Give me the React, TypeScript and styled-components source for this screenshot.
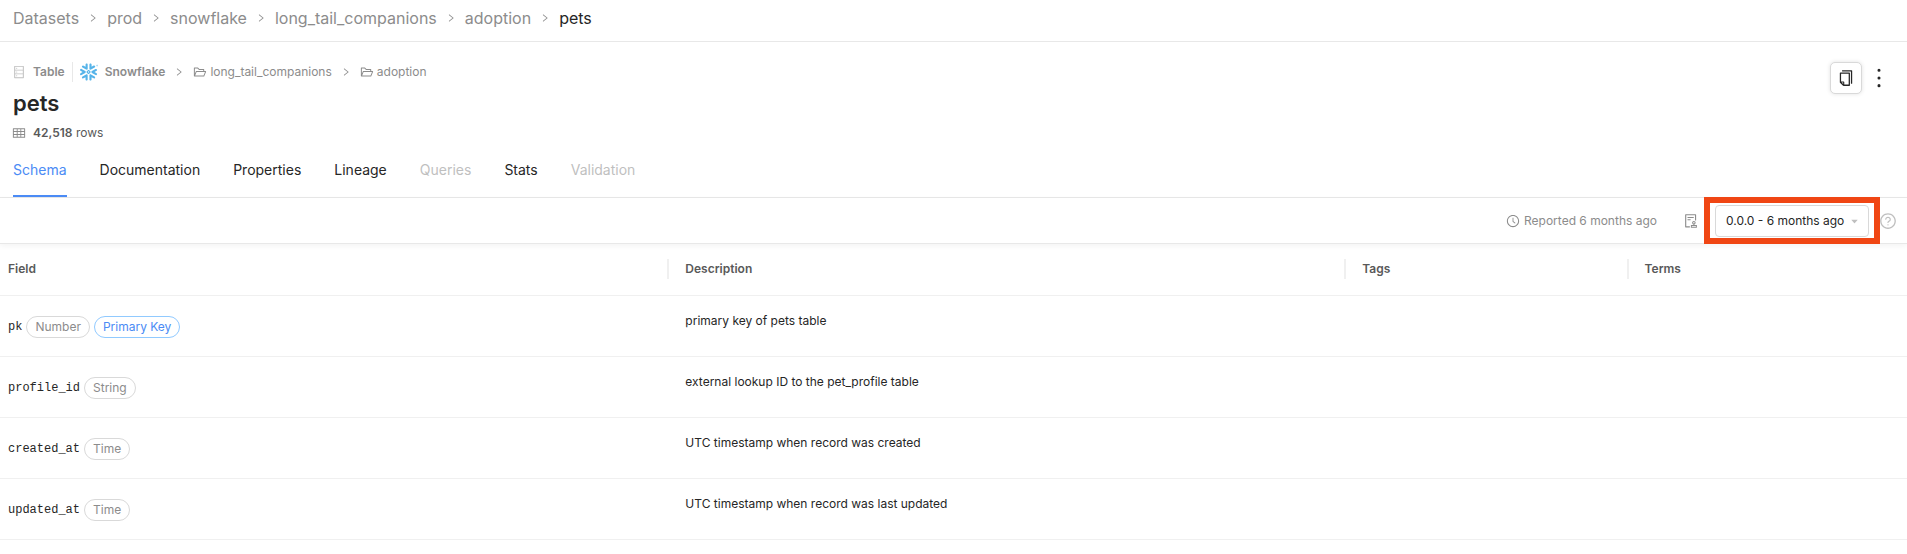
import React from 'react';
import styled, { createGlobalStyle } from 'styled-components';
import {
  AiFillCaretDown,
  AiOutlineAudit,
  AiOutlineClockCircle,
  AiOutlineCopy,
  AiOutlineDatabase,
  AiOutlineFolderOpen,
  AiOutlineMore,
  AiOutlineQuestionCircle,
  AiOutlineRight,
  AiOutlineTable,
} from 'react-icons/ai';
import { SiSnowflake } from 'react-icons/si';

const GlobalStyle = createGlobalStyle`
  * { box-sizing: border-box; }
  body {
    margin: 0;
    background: #fff;
    color: #262626;
    font-family: Inter, "Liberation Sans", sans-serif;
    font-size: 12px;
    line-height: 20px;
  }
  a { color: inherit; text-decoration: none; }
  button, select { font: inherit; color: inherit; }
  svg { display: block; flex: none; }
`;

const BreadcrumbBar = styled.nav`
  display: flex;
  align-items: center;
  gap: 9px;
  height: 42px;
  padding: 0 13px 6px;
  border-bottom: 1px solid #e8e8e8;
  font-size: 16px;
  color: #8c8c8c;
`;

const Crumb = styled.a<{ $current?: boolean }>`
  color: ${(p) => (p.$current ? '#262626' : 'inherit')};
`;

const Header = styled.header`
  display: flex;
  justify-content: space-between;
  padding: 20px 14px 0 12px;
`;

const Summary = styled.div`
  display: flex;
  flex-direction: column;
`;

const Platform = styled.div`
  display: flex;
  align-items: center;
  height: 20px;
  color: #8c8c8c;
`;

const EntityType = styled.span`
  display: flex;
  align-items: center;
  gap: 7px;
  padding-right: 7px;
  border-right: 1px solid #e8e8e8;
  font-weight: 600;
  svg { color: #bfbfbf; }
`;

const PlatformName = styled.a`
  display: flex;
  align-items: center;
  gap: 7px;
  padding-left: 7px;
  font-weight: 600;
  svg { color: #56b4e9; }
`;

const PathSeparator = styled(AiOutlineRight)`
  margin: 0 9px;
`;

const Folder = styled.a`
  display: flex;
  align-items: center;
  gap: 3px;
`;

const Title = styled.h1`
  margin: 5px 0 4px 1px;
  font-size: 22px;
  line-height: 32px;
  font-weight: 600;
`;

const RowCount = styled.div`
  display: flex;
  align-items: center;
  gap: 7px;
  color: #595959;
  svg { color: #8c8c8c; }
  b { font-weight: 600; }
`;

const Actions = styled.div`
  display: flex;
  align-items: center;
  align-self: flex-start;
  gap: 3px;
`;

const CopyButton = styled.button`
  display: grid;
  place-items: center;
  width: 32px;
  height: 32px;
  padding: 0;
  border: 1px solid #d9d9d9;
  border-radius: 5px;
  background: #fff;
  box-shadow: 0 0 4px rgba(0, 0, 0, 0.12);
`;

const MenuButton = styled.button`
  padding: 0;
  border: 0;
  background: none;
`;

const Tabs = styled.div`
  display: flex;
  gap: 33px;
  padding: 0 13px;
  border-bottom: 1px solid #e8e8e8;
`;

const Tab = styled.button<{ $active?: boolean }>`
  height: 54px;
  padding: 2px 0 0;
  border: 0;
  border-bottom: 2px solid ${(p) => (p.$active ? '#4b8bf5' : 'transparent')};
  background: none;
  color: ${(p) => (p.$active ? '#4b8bf5' : '#262626')};
  font-size: 14px;
  &:disabled { color: #bfbfbf; }
`;

const Toolbar = styled.section`
  display: flex;
  align-items: center;
  justify-content: flex-end;
  height: 46px;
  padding-right: 10px;
  border-bottom: 1px solid #e8e8e8;
  box-shadow: 0 2px 6px rgba(0, 0, 0, 0.05);
  color: #8c8c8c;
`;

const Reported = styled.span`
  display: flex;
  align-items: center;
  gap: 4px;
  margin-right: 26px;
`;

const AuditButton = styled(MenuButton)`
  color: #8c8c8c;
`;

const Highlight = styled.div`
  margin: -1px -1px -1px 5px;
  padding: 2px 5px 1px;
  border: 6px solid #f04614;
`;

const VersionPicker = styled.label`
  display: grid;
  align-items: center;
  width: 154px;
  svg {
    grid-area: 1 / 1;
    justify-self: end;
    margin-right: 10px;
    color: #bfbfbf;
    pointer-events: none;
  }
`;

const VersionSelect = styled.select`
  grid-area: 1 / 1;
  width: 100%;
  height: 32px;
  padding: 0 12px 0 10px;
  border: 1px solid #d9d9d9;
  border-radius: 4px;
  background: #fff;
  color: #262626;
  appearance: none;
`;

const HelpButton = styled(MenuButton)`
  color: #bfbfbf;
`;

const SchemaTable = styled.table`
  width: 100%;
  table-layout: fixed;
  border-collapse: separate;
  border-spacing: 0;
`;

const HeadCell = styled.th<{ $width: string }>`
  width: ${(p) => p.$width};
  height: 52px;
  padding: 0 0 1px;
  border-bottom: 1px solid #f0f0f0;
  color: #595959;
  font-weight: 600;
  text-align: left;
  span {
    display: block;
    padding-left: 16px;
    border-left: 2px solid #f0f0f0;
    margin-left: -2px;
  }
  &:first-child span {
    padding-left: 8px;
    margin: 0;
    border: 0;
  }
`;

const Cell = styled.td`
  height: 61px;
  padding: 15px 16px;
  border-bottom: 1px solid #f0f0f0;
  vertical-align: top;
`;

const FieldCell = styled(Cell)`
  padding: 2px 8px 0;
  vertical-align: middle;
`;

const Field = styled.div`
  display: flex;
  align-items: center;
  gap: 4px;
`;

const FieldName = styled.code`
  font-family: "Liberation Mono", monospace;
  font-size: 12px;
`;

const Pill = styled.span<{ $primary?: boolean }>`
  padding: 0 8px;
  border: 1px solid ${(p) => (p.$primary ? '#91caff' : '#d9d9d9')};
  border-radius: 11px;
  color: ${(p) => (p.$primary ? '#4b8bf5' : '#8c8c8c')};
`;

const crumbs = ['Datasets', 'prod', 'snowflake', 'long_tail_companions', 'adoption', 'pets'];

const tabs = [
  { name: 'Schema', active: true },
  { name: 'Documentation' },
  { name: 'Properties' },
  { name: 'Lineage' },
  { name: 'Queries', disabled: true },
  { name: 'Stats' },
  { name: 'Validation', disabled: true },
];

const fields = [
  { name: 'pk', type: 'Number', primary: true, description: 'primary key of pets table' },
  { name: 'profile_id', type: 'String', description: 'external lookup ID to the pet_profile table' },
  { name: 'created_at', type: 'Time', description: 'UTC timestamp when record was created' },
  { name: 'updated_at', type: 'Time', description: 'UTC timestamp when record was last updated' },
];

const columns = [
  { name: 'Field', width: '35.1%' },
  { name: 'Description', width: '35.5%' },
  { name: 'Tags', width: '14.8%' },
  { name: 'Terms', width: '14.6%' },
];

export default function App() {
  return (
    <>
      <GlobalStyle />
      <BreadcrumbBar aria-label="Breadcrumb">
        {crumbs.map((name, i) => (
          <React.Fragment key={name}>
            {i > 0 && <AiOutlineRight size={10} />}
            <Crumb href="#" $current={i === crumbs.length - 1}>{name}</Crumb>
          </React.Fragment>
        ))}
      </BreadcrumbBar>
      <Header>
        <Summary>
          <Platform>
            <EntityType><AiOutlineDatabase size={14} />Table</EntityType>
            <PlatformName href="#"><SiSnowflake size={18} />Snowflake</PlatformName>
            <PathSeparator size={10} />
            <Folder href="#"><AiOutlineFolderOpen size={14} />long_tail_companions</Folder>
            <PathSeparator size={10} />
            <Folder href="#"><AiOutlineFolderOpen size={14} />adoption</Folder>
          </Platform>
          <Title>pets</Title>
          <RowCount><AiOutlineTable size={14} /><span><b>42,518</b> rows</span></RowCount>
        </Summary>
        <Actions>
          <CopyButton aria-label="Copy URN"><AiOutlineCopy size={18} /></CopyButton>
          <MenuButton aria-label="More"><AiOutlineMore size={28} /></MenuButton>
        </Actions>
      </Header>
      <Tabs role="tablist">
        {tabs.map((t) => (
          <Tab key={t.name} role="tab" aria-selected={!!t.active} $active={t.active} disabled={t.disabled}>
            {t.name}
          </Tab>
        ))}
      </Tabs>
      <Toolbar>
        <Reported><AiOutlineClockCircle size={14} />Reported 6 months ago</Reported>
        <AuditButton aria-label="Show blame"><AiOutlineAudit size={16} /></AuditButton>
        <Highlight>
          <VersionPicker>
            <VersionSelect aria-label="Version">
              <option>0.0.0 - 6 months ago</option>
            </VersionSelect>
            <AiFillCaretDown size={9} />
          </VersionPicker>
        </Highlight>
        <HelpButton aria-label="Help"><AiOutlineQuestionCircle size={18} /></HelpButton>
      </Toolbar>
      <SchemaTable>
        <thead>
          <tr>
            {columns.map((c) => (
              <HeadCell key={c.name} $width={c.width}><span>{c.name}</span></HeadCell>
            ))}
          </tr>
        </thead>
        <tbody>
          {fields.map((f) => (
            <tr key={f.name}>
              <FieldCell>
                <Field>
                  <FieldName>{f.name}</FieldName>
                  <Pill>{f.type}</Pill>
                  {f.primary && <Pill $primary>Primary Key</Pill>}
                </Field>
              </FieldCell>
              <Cell>{f.description}</Cell>
              <Cell />
              <Cell />
            </tr>
          ))}
        </tbody>
      </SchemaTable>
    </>
  );
}
